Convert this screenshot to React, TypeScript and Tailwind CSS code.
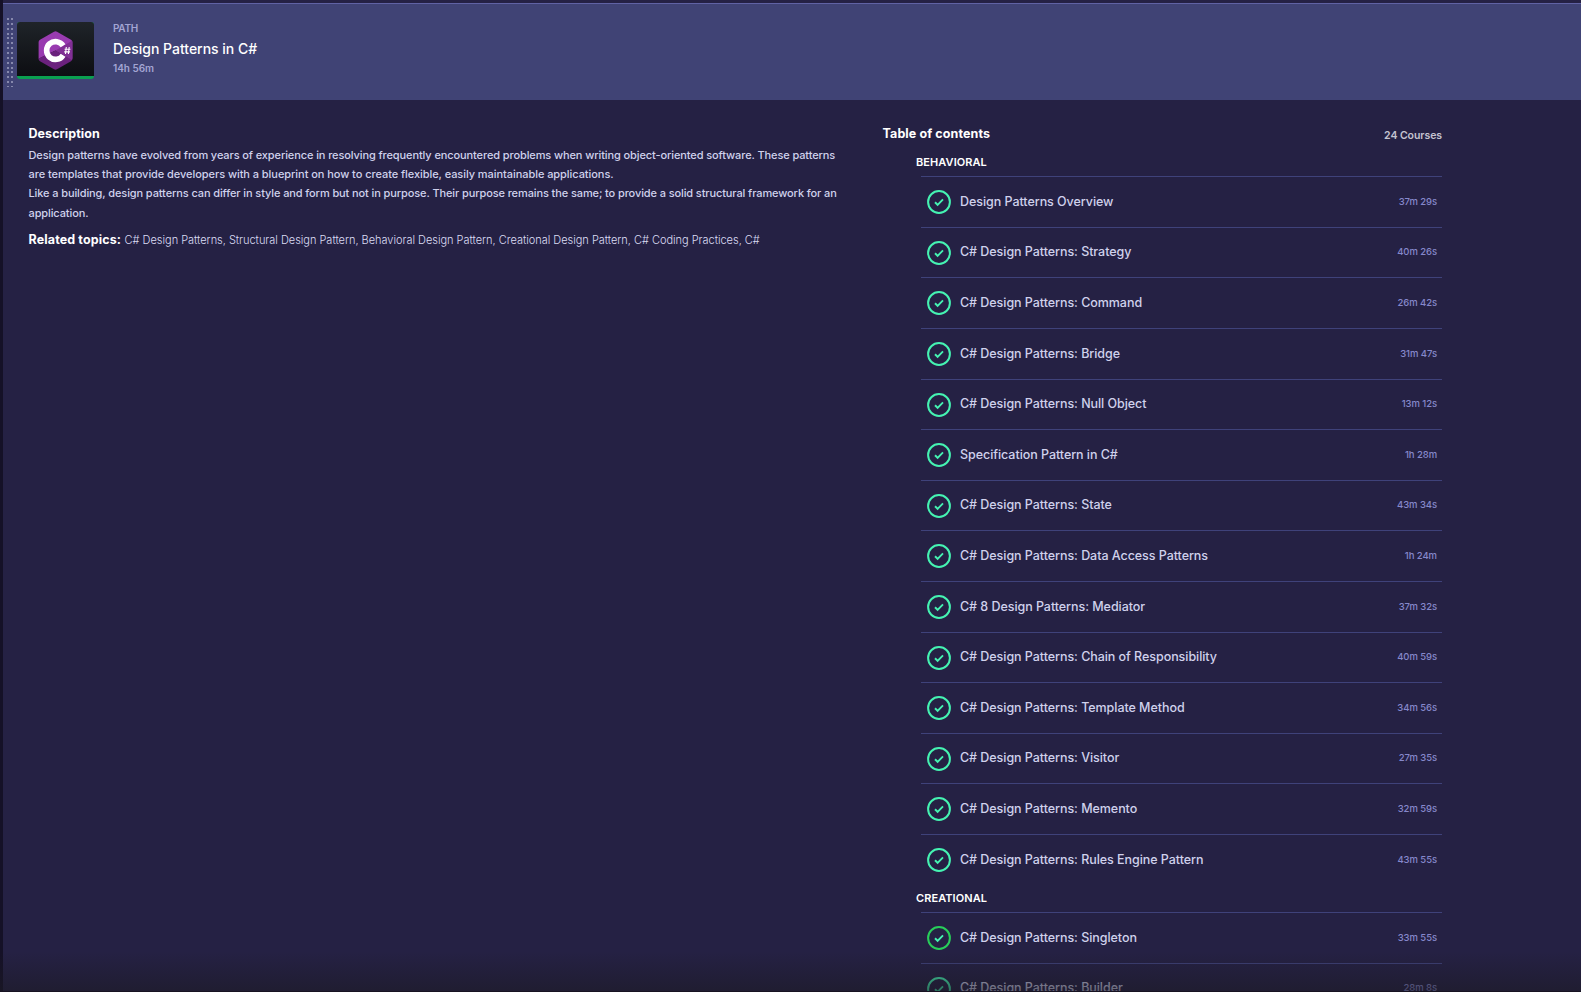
type Course = { title: string; duration: string; ring?: string };

const behavioral: Course[] = [
  { title: "Design Patterns Overview", duration: "37m 29s" },
  { title: "C# Design Patterns: Strategy", duration: "40m 26s" },
  { title: "C# Design Patterns: Command", duration: "26m 42s" },
  { title: "C# Design Patterns: Bridge", duration: "31m 47s" },
  { title: "C# Design Patterns: Null Object", duration: "13m 12s" },
  { title: "Specification Pattern in C#", duration: "1h 28m" },
  { title: "C# Design Patterns: State", duration: "43m 34s" },
  { title: "C# Design Patterns: Data Access Patterns", duration: "1h 24m" },
  { title: "C# 8 Design Patterns: Mediator", duration: "37m 32s" },
  { title: "C# Design Patterns: Chain of Responsibility", duration: "40m 59s" },
  { title: "C# Design Patterns: Template Method", duration: "34m 56s" },
  { title: "C# Design Patterns: Visitor", duration: "27m 35s" },
  { title: "C# Design Patterns: Memento", duration: "32m 59s" },
  { title: "C# Design Patterns: Rules Engine Pattern", duration: "43m 55s" },
];

const creational: Course[] = [
  { title: "C# Design Patterns: Singleton", duration: "33m 55s", ring: "#28cd5a" },
  { title: "C# Design Patterns: Builder", duration: "28m 8s" },
];

function CheckIcon({ ring = "#45f3b2" }: { ring?: string }) {
  return (
    <svg className="mt-[0.3px] size-6 shrink-0" viewBox="0 0 24 24" fill="none">
      <circle cx="12" cy="12" r="10.9" stroke={ring} strokeWidth="2" />
      <path d="M8 12.3l2.6 2.5L16 9.4" stroke="#45f3b2" strokeWidth="1.9" />
    </svg>
  );
}

function CSharpLogo() {
  return (
    <svg className="h-[39px] w-[35px]" viewBox="0 0 35 39">
      <path d="M16 .8a3 3 0 0 1 3 0l14 8a2.6 2.6 0 0 1 1.4 2.4v16.6L17.5 19.5.6 27.8V11.2A2.6 2.6 0 0 1 2 8.8z" fill="#993bb0" />
      <path d="M.6 27.5a2.6 2.6 0 0 0 1.4 2.7l14 8a3 3 0 0 0 3 0l14-8a2.6 2.6 0 0 0 1.1-1.4L17.5 19.5z" fill="#6b217d" />
      <path d="M34 9.8a2.6 2.6 0 0 1 .4 1.4v16.6q0 .8-.4 1.4L17.5 19.5z" fill="#812f95" />
      <path d="M25.1 14.8a8.9 8.9 0 1 0 0 9.4" fill="none" stroke="#fff" strokeWidth="5.6" />
      <path d="M28.3 16l-.8 7M31.2 16l-.8 7M26.6 18.2h5.8M26.2 20.9h5.8" stroke="#fff" strokeWidth="1.1" />
    </svg>
  );
}

function DragHandle() {
  return (
    <svg className="h-[69px] w-[6px] shrink-0" viewBox="0 0 6 69">
      {Array.from({ length: 15 }, (_, row) => (
        <g key={row} fill="#8688ac">
          <rect x="0" y={Math.round(row * 4.85)} width="2" height={row === 14 ? 1 : 2} />
          <rect x="4" y={Math.round(row * 4.85)} width="2" height={row === 14 ? 1 : 2} />
        </g>
      ))}
    </svg>
  );
}

function CourseGroup({ name, courses }: { name: string; courses: Course[] }) {
  return (
    <section>
      <h3 className="ml-[33.5px] h-[22.3px] text-[11px] leading-4 font-semibold tracking-[0.07px] text-white">{name}</h3>
      <ul className="ml-[38.5px]">
        {courses.map((course) => (
          <li key={course.title} className="flex h-[50.6px] items-center border-t border-[#3f427a] pr-[5px] pl-[6px]">
            <CheckIcon ring={course.ring} />
            <span className="ml-[9px] flex-1 pb-[0.6px] text-[12.5px] leading-5 font-[450] tracking-[-0.05px] text-[#d0d1ec]">{course.title}</span>
            <span className="pb-[0.6px] text-[9.5px] leading-5 font-[450] tracking-[-0.07px] text-[#8588cb]">{course.duration}</span>
          </li>
        ))}
      </ul>
    </section>
  );
}

export default function App() {
  return (
    <div className="relative flex h-[992px] w-full overflow-hidden bg-[#252144] font-['Inter',sans-serif]">
      <div className="w-[3px] shrink-0 bg-[#151127]" />
      <div className="flex min-w-0 flex-1 flex-col">
        <div className="h-[3px] shrink-0" />
        <header className="flex h-[97px] shrink-0 border-t border-[#6062a4] bg-[#404375] pl-1">
          <div className="pt-[14px]">
            <DragHandle />
          </div>
          <div className="mt-[18px] ml-1 flex h-[57px] w-[77px] flex-col overflow-hidden rounded-[3px] bg-[#0a9f50]">
            <div className="flex h-[54px] items-center justify-center bg-linear-to-b from-[#1f2429] to-[#0d0e12] pt-[3px] pr-px">
              <CSharpLogo />
            </div>
          </div>
          <div className="ml-[19px] pt-[16px]">
            <p className="text-[10px] leading-4 font-semibold tracking-[-0.28px] text-[#a3a5d3]">PATH</p>
            <h1 className="mt-[3px] text-[14px] leading-5 font-medium tracking-[-0.02px] text-white">Design Patterns in C#</h1>
            <p className="mt-px text-[10px] leading-4 font-semibold tracking-[-0.03px] text-[#a3a5d3]">14h 56m</p>
          </div>
        </header>
        <main className="flex pl-[25.5px]">
          <section className="w-[854px] shrink-0 pt-6">
            <h2 className="text-[12.5px] leading-5 font-bold tracking-[0.06px] text-white">Description</h2>
            <div className="mt-[1.8px] text-[11px] leading-[19.25px] font-[450] whitespace-nowrap text-[#d0d1ec]">
              <p className="tracking-[-0.105px]">
                Design patterns have evolved from years of experience in resolving frequently encountered problems when writing object-oriented software. These patterns
                <br />
                <span className="tracking-[-0.058px]">are templates that provide developers with a blueprint on how to create flexible, easily maintainable applications.</span>
              </p>
              <p className="tracking-[-0.107px]">
                Like a building, design patterns can differ in style and form but not in purpose. Their purpose remains the same; to provide a solid structural framework for an
                <br />
                application.
              </p>
            </div>
            <p className="mt-[5.2px] leading-5 whitespace-nowrap">
              <strong className="text-[12.5px] font-bold tracking-[0.12px] text-white">Related topics:</strong>
              <span className="ml-[3.5px] text-[11px] font-light tracking-[-0.022px] text-[#dcddf4]">
                C# Design Patterns, Structural Design Pattern, Behavioral Design Pattern, Creational Design Pattern, C# Coding Practices, C#
              </span>
            </p>
          </section>
          <section className="w-[559.5px] pt-6">
            <div className="flex h-[30px] justify-between">
              <h2 className="text-[12.5px] leading-5 font-bold tracking-[0.1px] text-white">Table of contents</h2>
              <p className="pt-[2px] text-[10.5px] leading-5 font-semibold tracking-[-0.06px] text-[#c4c3d0]">24 Courses</p>
            </div>
            <CourseGroup name="BEHAVIORAL" courses={behavioral} />
            <div className="h-[5.3px]" />
            <CourseGroup name="CREATIONAL" courses={creational} />
          </section>
        </main>
      </div>
      <div className="pointer-events-none absolute inset-x-0 bottom-0 h-10 bg-linear-to-b from-[#1c1a24]/0 to-[#1c1a24]/60" />
      <div className="pointer-events-none absolute inset-x-0 bottom-0 h-px bg-[#171322]" />
    </div>
  );
}
